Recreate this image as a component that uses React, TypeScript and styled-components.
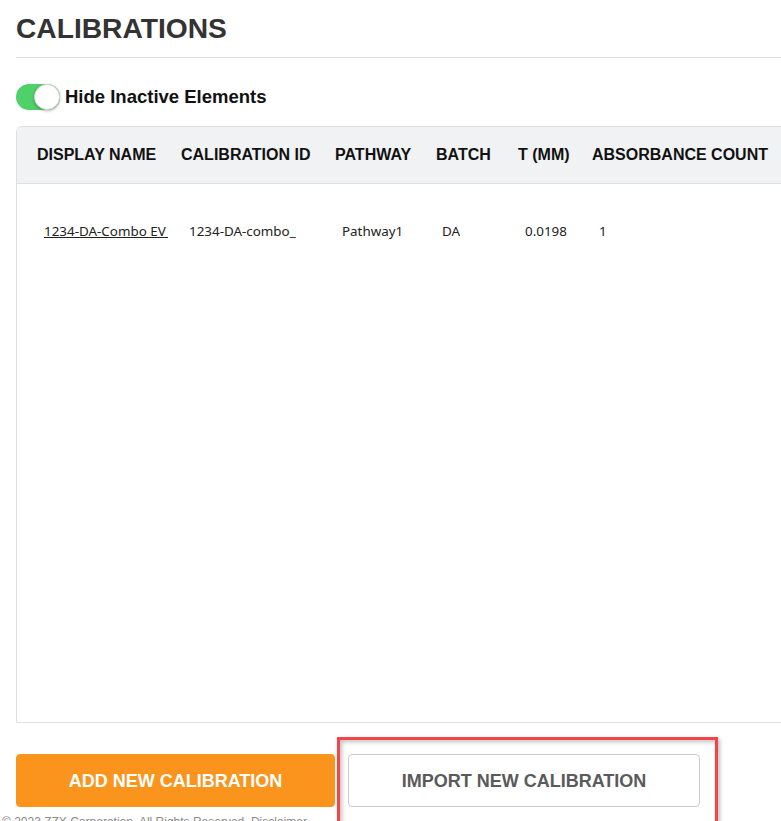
import React, { useState } from 'react';
import styled, { createGlobalStyle } from 'styled-components';

const GlobalStyle = createGlobalStyle`
  html, body {
    margin: 0;
    padding: 0;
    background: #ffffff;
    overflow: hidden;
  }
  body {
    font-family: "Liberation Sans", Arial, sans-serif;
  }
`;

const Page = styled.div`
  width: 100%;
  height: 821px;
  padding-left: 16px;
  box-sizing: border-box;
  overflow: hidden;
`;

const Title = styled.h1`
  margin: 0;
  height: 58px;
  line-height: 57px;
  font-size: 28.2px;
  font-weight: 700;
  color: #333333;
  border-bottom: 1px solid #dddddd;
  box-sizing: border-box;
`;

const ToggleRow = styled.label`
  display: flex;
  align-items: center;
  gap: 5px;
  margin-top: 26px;
  height: 26px;
  cursor: pointer;
`;

const Track = styled.span<{ $on: boolean }>`
  position: relative;
  display: inline-block;
  width: 44px;
  height: 26px;
  border-radius: 13px;
  background: ${({ $on }) => ($on ? '#4fd068' : '#cccccc')};
  transition: background 0.2s;
`;

const Knob = styled.span<{ $on: boolean }>`
  position: absolute;
  top: 0;
  left: ${({ $on }) => ($on ? '18px' : '0')};
  width: 26px;
  height: 26px;
  border-radius: 50%;
  background: #ffffff;
  box-sizing: border-box;
  border: 1px solid #d8d8d8;
  box-shadow: 0 1px 3px rgba(0, 0, 0, 0.3);
  transition: left 0.2s;
`;

const ToggleLabel = styled.span`
  font-size: 18.5px;
  font-weight: 700;
  color: #111111;
`;

const TableBox = styled.div`
  margin-top: 16px;
  width: 820px;
  height: 597px;
  border: 1px solid #dedfe1;
  border-top-left-radius: 6px;
  box-sizing: border-box;
  overflow: hidden;
  display: flex;
  flex-direction: column;
`;

const columns = '144px 154px 101px 82px 74px 1fr';

const HeadRow = styled.div`
  display: grid;
  grid-template-columns: ${columns};
  height: 57px;
  align-items: center;
  background: #f1f2f4;
  border-bottom: 1px solid #dedfe1;
  box-sizing: border-box;
`;

const HeadCell = styled.div`
  padding-left: 20px;
  font-size: 16px;
  font-weight: 700;
  color: #111111;
  white-space: nowrap;
`;

const DataRow = styled.div`
  display: grid;
  grid-template-columns: ${columns};
  padding-top: 37px;
  line-height: 20px;
`;

const DataCell = styled.div<{ $clip?: number; $pad?: number }>`
  padding-left: ${({ $pad }) => $pad ?? 27}px;
  font-family: "Noto Sans", "Open Sans", sans-serif;
  font-size: 13.4px;
  color: #222222;
  white-space: nowrap;
  min-width: 0;
  & > span {
    display: inline-block;
    max-width: ${({ $clip }) => ($clip ? `${$clip}px` : 'none')};
    overflow: hidden;
    vertical-align: top;
  }
`;

const NameLink = styled.a`
  color: #222222;
  text-decoration: underline;
  cursor: pointer;
`;

const ButtonRow = styled.div`
  display: flex;
  gap: 13px;
  margin-top: 31px;
`;

const Button = styled.button<{ $primary?: boolean }>`
  position: relative;
  height: 53px;
  width: ${({ $primary }) => ($primary ? '319px' : '352px')};
  padding: 2px 0 0;
  border-radius: 4px;
  border: 1px solid ${({ $primary }) => ($primary ? '#fa941c' : '#cccccc')};
  background: ${({ $primary }) => ($primary ? '#fa941c' : '#ffffff')};
  color: ${({ $primary }) => ($primary ? '#ffffff' : '#5a5a5a')};
  font-family: "Liberation Sans", Arial, sans-serif;
  font-size: 18px;
  font-weight: 700;
  cursor: pointer;
`;

const Highlight = styled.span`
  position: absolute;
  left: -12px;
  top: -18px;
  width: 381px;
  height: 90px;
  border: 3px solid #f2454a;
  box-sizing: border-box;
  box-shadow: 2px 2px 4px rgba(0, 0, 0, 0.25), inset 2px 2px 4px rgba(0, 0, 0, 0.25);
  pointer-events: none;
`;

const Footer = styled.div`
  margin-top: 8px;
  margin-left: -14px;
  font-size: 12px;
  color: #8a8a8a;
  white-space: nowrap;
`;

const headers = ['DISPLAY NAME', 'CALIBRATION ID', 'PATHWAY', 'BATCH', 'T (MM)', 'ABSORBANCE COUNT'];

const App: React.FC = () => {
  const [hideInactive, setHideInactive] = useState(true);

  return (
    <>
      <GlobalStyle />
      <Page>
        <Title>CALIBRATIONS</Title>
        <ToggleRow onClick={() => setHideInactive(!hideInactive)}>
          <Track $on={hideInactive}>
            <Knob $on={hideInactive} />
          </Track>
          <ToggleLabel>Hide Inactive Elements</ToggleLabel>
        </ToggleRow>
        <TableBox>
          <HeadRow>
            {headers.map((h) => (
              <HeadCell key={h}>{h}</HeadCell>
            ))}
          </HeadRow>
          <DataRow>
            <DataCell $clip={124}>
              <span>
                <NameLink>1234-DA-Combo EV Calibration</NameLink>
              </span>
            </DataCell>
            <DataCell $clip={118} $pad={28}>
              <span>1234-DA-combo_</span>
            </DataCell>
            <DataCell>Pathway1</DataCell>
            <DataCell $pad={26}>DA</DataCell>
            <DataCell>0.0198</DataCell>
            <DataCell>1</DataCell>
          </DataRow>
        </TableBox>
        <ButtonRow>
          <Button $primary>ADD NEW CALIBRATION</Button>
          <Button>
            IMPORT NEW CALIBRATION
            <Highlight />
          </Button>
        </ButtonRow>
        <Footer>© 2023 ZZX Corporation. All Rights Reserved. Disclaimer</Footer>
      </Page>
    </>
  );
};

export default App;
